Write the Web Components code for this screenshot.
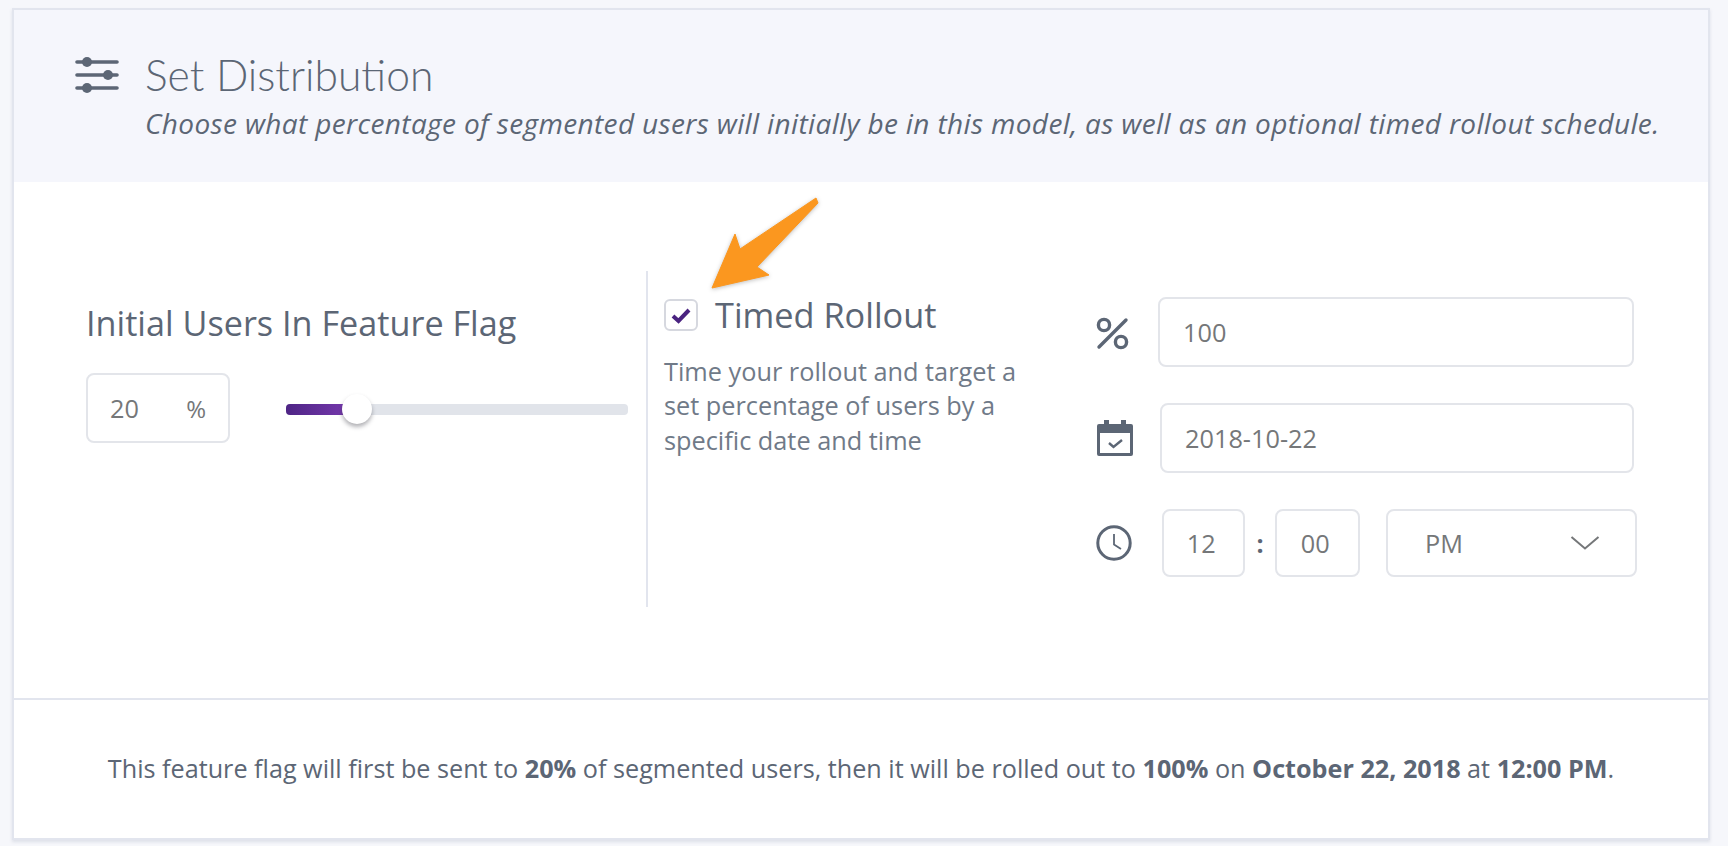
<!DOCTYPE html>
<html lang="en">
<head>
<meta charset="utf-8">
<title>Set Distribution</title>
<style>
  html, body { margin: 0; height: 100%; overflow: hidden; }
  body { background: #f6f7fb; font-family: "Open Sans", sans-serif; color: #5c6675; }
  b { font-weight: 700; }
</style>
</head>
<body>
<distribution-card>
  <panel-header slot="header" title="Set Distribution" description="Choose what percentage of segmented users will initially be in this model, as well as an optional timed rollout schedule."></panel-header>
  <initial-users value="20"></initial-users>
  <timed-rollout></timed-rollout>
  <rollout-form></rollout-form>
  <span slot="footer">This feature flag will first be sent to <b>20%</b> of segmented users, then it will be rolled out to <b>100%</b> on <b>October 22, 2018</b> at <b>12:00 PM</b>.</span>
</distribution-card>

<script>
const templateCard = document.createElement('template');
templateCard.innerHTML = `
  <style>
    :host{
      display: block;
      box-sizing: border-box;
      width: 1698px;
      height: 832px;
      margin: 8px 0 0 12px;
      border: 2px solid #e2e5ee;
      background: #fff;
      box-shadow: 0 2px 3px rgba(150,160,180,.25);
      position: relative;
    }
    .body{
      display: flex;
      height: 518px;
      box-sizing: border-box;
      padding: 89px 0 91px 72px;
      border-bottom: 2px solid #e2e5ee;
    }
    .footer{
      display: flex;
      align-items: center;
      justify-content: center;
      height: 136px;
      font-size: 25.2px;
      color: #5c6675;
    }
    .arrow{
      position: absolute;
      left: 690px;
      top: 186px;
      filter: drop-shadow(0 1px 2px rgba(0,0,0,.25));
    }
  </style>
  <slot name="header"></slot>
  <div class="body"><slot></slot></div>
  <div class="footer"><slot name="footer"></slot></div>
  <svg class="arrow" width="140" height="110" viewBox="0 0 140 110">
    <path fill="#fb971f" stroke="#fb971f" stroke-width="1" stroke-linejoin="round" d="M112 2 L36 53 L31 38 L8 92 L65 79 L53 71 L114 7 Z"/>
  </svg>
`;

class DistributionCard extends HTMLElement {
  constructor() {
    super();
    this.attachShadow({mode: 'open'});
    this.shadowRoot.appendChild(templateCard.content.cloneNode(true));
  }
}
window.customElements.define('distribution-card', DistributionCard);

const templateHeader = document.createElement('template');
templateHeader.innerHTML = `
  <style>
    :host{
      display: flex;
      box-sizing: border-box;
      height: 172px;
      padding: 43px 0 0 61px;
      background: #f5f6fc;
      color: #5c6675;
    }
    svg{ margin-top: 3px; flex: none; }
    .text{ margin-left: 26px; white-space: nowrap; }
    .title{
      font: 300 42.6px/44px Lato, sans-serif;
    }
    .description{
      font: italic 400 28px/36px "Open Sans", sans-serif;
      letter-spacing: .36px;
      margin-top: 8px;
    }
  </style>
  <svg width="44" height="38" viewBox="0 0 44 38">
    <g stroke="#5c6675" stroke-width="3.6" stroke-linecap="round">
      <path d="M2 6H42M2 19H42M2 32H42"/>
    </g>
    <g fill="#5c6675">
      <circle cx="12" cy="6" r="5"/>
      <circle cx="33" cy="19" r="5"/>
      <circle cx="12" cy="32" r="5"/>
    </g>
  </svg>
  <div class="text">
    <div class="title"></div>
    <div class="description"></div>
  </div>
`;

class PanelHeader extends HTMLElement {
  constructor() {
    super();
    this.attachShadow({mode: 'open'});
    this.shadowRoot.appendChild(templateHeader.content.cloneNode(true));
  }
  connectedCallback() {
    this.shadowRoot.querySelector('.title').textContent = this.getAttribute('title');
    this.shadowRoot.querySelector('.description').textContent = this.getAttribute('description');
  }
}
window.customElements.define('panel-header', PanelHeader);

const templateBox = document.createElement('template');
templateBox.innerHTML = `
  <style>
    :host{
      display: flex;
      align-items: center;
      box-sizing: border-box;
      border: 2px solid #e3e5ea;
      border-radius: 8px;
      background: #fff;
      color: #757779;
      font-size: 25.3px;
      height: 70px;
    }
  </style>
  <slot></slot>
`;

class InputBox extends HTMLElement {
  constructor() {
    super();
    this.attachShadow({mode: 'open'});
    this.shadowRoot.appendChild(templateBox.content.cloneNode(true));
  }
}
window.customElements.define('input-box', InputBox);

const templateUsers = document.createElement('template');
templateUsers.innerHTML = `
  <style>
    :host{
      display: block;
      box-sizing: border-box;
      width: 560px;
      flex: none;
      padding-top: 29px;
    }
    h3{
      margin: 0;
      font-size: 34.2px;
      font-weight: 400;
      line-height: 46px;
      color: #5c6675;
    }
    .row{
      display: flex;
      align-items: center;
      margin-top: 27px;
    }
    input-box{
      width: 144px;
      justify-content: space-between;
      padding: 0 22px 0 22px;
      flex: none;
    }
    .pct{ font-size: 24px; }
    .track{
      position: relative;
      width: 342px;
      height: 11px;
      margin: 2px 0 0 56px;
      border-radius: 4px;
      background: #e1e4ea;
    }
    .fill{
      width: 72px;
      height: 100%;
      border-radius: 4px 0 0 4px;
      background: linear-gradient(90deg, #4e2585, #7c3bb3);
    }
    .knob{
      position: absolute;
      left: 56px;
      top: -10px;
      width: 30px;
      height: 30px;
      border-radius: 50%;
      background: #fff;
      box-shadow: 0 3px 4px rgba(60,60,70,.4);
    }
  </style>
  <h3>Initial Users In Feature Flag</h3>
  <div class="row">
    <input-box><span class="value"></span><span class="pct">%</span></input-box>
    <div class="track"><div class="fill"></div><div class="knob"></div></div>
  </div>
`;

class InitialUsers extends HTMLElement {
  constructor() {
    super();
    this.attachShadow({mode: 'open'});
    this.shadowRoot.appendChild(templateUsers.content.cloneNode(true));
  }
  connectedCallback() {
    this.shadowRoot.querySelector('.value').textContent = this.getAttribute('value');
  }
}
window.customElements.define('initial-users', InitialUsers);

const templateRollout = document.createElement('template');
templateRollout.innerHTML = `
  <style>
    :host{
      display: block;
      box-sizing: border-box;
      width: 450px;
      flex: none;
      padding: 24px 0 0 16px;
      border-left: 2px solid #e2e5ee;
    }
    .head{
      display: flex;
      align-items: center;
      height: 40px;
    }
    .check{
      box-sizing: border-box;
      width: 34px;
      height: 32px;
      border: 2px solid #d6d8df;
      border-radius: 6px;
      display: flex;
      align-items: center;
      justify-content: center;
      flex: none;
    }
    h3{
      margin: -2px 0 0 17px;
      font-size: 34.3px;
      font-weight: 400;
      color: #5c6675;
    }
    p{
      margin: 19px 0 0;
      font-size: 25.3px;
      line-height: 34.3px;
      color: #707a88;
    }
  </style>
  <div class="head">
    <div class="check">
      <svg width="20" height="17" viewBox="0 0 20 17"><path d="M2 9l5.5 5L18 3" fill="none" stroke="#4a2380" stroke-width="4"/></svg>
    </div>
    <h3>Timed Rollout</h3>
  </div>
  <p>Time your rollout and target a<br>set percentage of users by a<br>specific date and time</p>
`;

class TimedRollout extends HTMLElement {
  constructor() {
    super();
    this.attachShadow({mode: 'open'});
    this.shadowRoot.appendChild(templateRollout.content.cloneNode(true));
  }
}
window.customElements.define('timed-rollout', TimedRollout);

const templateForm = document.createElement('template');
templateForm.innerHTML = `
  <style>
    :host{
      display: flex;
      flex-direction: column;
      gap: 36px;
      box-sizing: border-box;
      width: 541px;
      flex: none;
      padding-top: 26px;
    }
    .row{ display: flex; align-items: center; }
    svg{ flex: none; }
    .wide{ padding-left: 23px; }
    .rate{ margin-left: 29px; width: 476px; }
    .date{ margin-left: 27px; width: 474px; }
    .time{ margin-left: 30px; width: 83px; height: 68px; justify-content: center; padding-right: 4px; }
    .colon{ width: 31px; text-align: center; font-weight: 700; font-size: 25px; color: #5c6675; }
    .minute{ margin-left: 0; width: 85px; height: 68px; justify-content: center; padding-right: 5px; }
    .ampm{ margin-left: 26px; width: 252px; height: 68px; padding: 0 35px 0 37px; justify-content: space-between; }
  </style>
  <div class="row">
    <svg width="33" height="33" viewBox="0 0 33 33" style="margin:3px 0 0">
      <g fill="none" stroke="#5c6675" stroke-width="3.4" stroke-linecap="round">
        <circle cx="8" cy="8" r="5.6"/>
        <circle cx="25" cy="25" r="5.6"/>
        <path d="M30 3L3 30"/>
      </g>
    </svg>
    <input-box class="wide rate">100</input-box>
  </div>
  <div class="row">
    <svg width="36" height="36" viewBox="0 0 36 36" style="margin-left:1px">
      <path fill="#5c6675" d="M2 4h5V0h5v4h12V0h5v4h5a2 2 0 0 1 2 2v28a2 2 0 0 1-2 2H2a2 2 0 0 1-2-2V6a2 2 0 0 1 2-2z"/>
      <path fill="#fff" d="M3 13h30v20H3z"/>
      <path fill="none" stroke="#5c6675" stroke-width="2.4" d="M12 23l4.5 4L25 20"/>
    </svg>
    <input-box class="wide date">2018-10-22</input-box>
  </div>
  <div class="row">
    <svg width="36" height="36" viewBox="0 0 36 36">
      <circle cx="18" cy="18" r="16.2" fill="none" stroke="#5c6675" stroke-width="3"/>
      <path d="M18 9v10.5l7 4.5" fill="none" stroke="#5c6675" stroke-width="1.8"/>
    </svg>
    <input-box class="time">12</input-box>
    <span class="colon">:</span>
    <input-box class="minute">00</input-box>
    <input-box class="ampm">PM
      <svg width="30" height="16" viewBox="0 0 30 16"><path d="M1.5 2L15 13.5 28.5 2" fill="none" stroke="#757779" stroke-width="2"/></svg>
    </input-box>
  </div>
`;

class RolloutForm extends HTMLElement {
  constructor() {
    super();
    this.attachShadow({mode: 'open'});
    this.shadowRoot.appendChild(templateForm.content.cloneNode(true));
  }
}
window.customElements.define('rollout-form', RolloutForm);
</script>
</body>
</html>
